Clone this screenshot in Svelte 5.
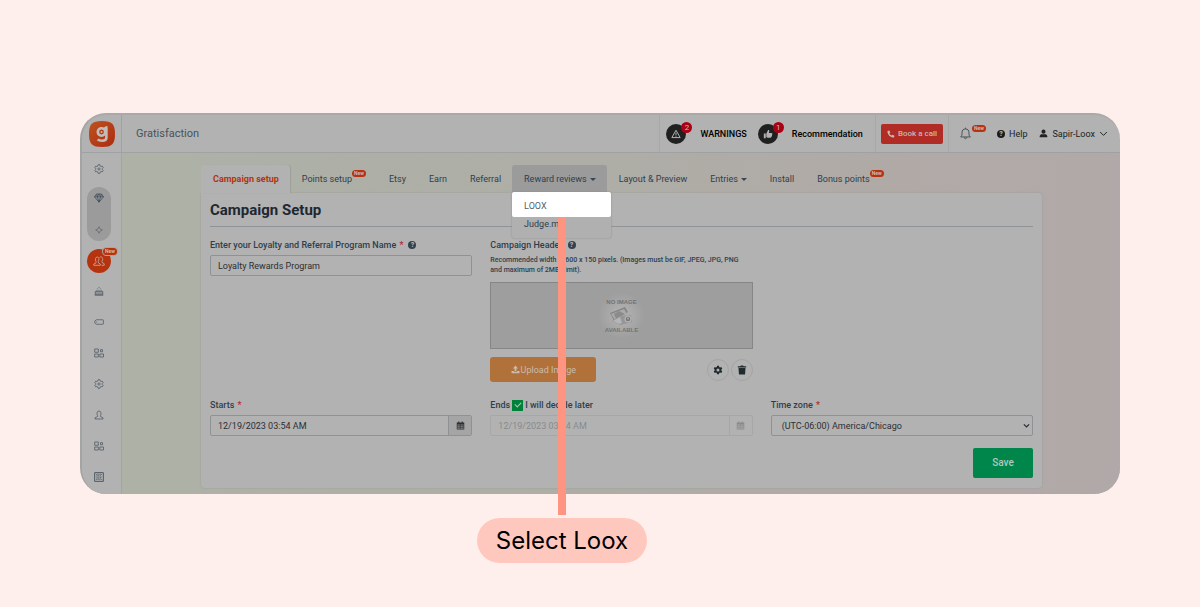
<script lang="ts">
	type Tab = { label: string; isNew?: boolean; items?: string[]; open?: boolean };

	const tabs: Tab[] = [
		{ label: 'Campaign setup' },
		{ label: 'Points setup', isNew: true },
		{ label: 'Etsy' },
		{ label: 'Earn' },
		{ label: 'Referral' },
		{ label: 'Reward reviews', items: ['LOOX', 'Judge.me'], open: true },
		{ label: 'Layout & Preview' },
		{ label: 'Entries', items: [] },
		{ label: 'Install' },
		{ label: 'Bonus points', isNew: true }
	];

	const lowerNav = ['cake', 'tag', 'widgets', 'gear', 'person', 'widgets', 'pattern'];

	let active = $state(0);
	let programName = $state('Loyalty Rewards Program');
	let starts = $state('12/19/2023 03:54 AM');
	let decideLater = $state(true);
</script>

{#snippet icon(name: string)}
	<svg class="icon" viewBox="0 0 12 12" aria-hidden="true">
		{#if name === 'gear'}
			<path d="M5 .8h2l.3 1.500 1.200.7 1.500-.4 1 1.800-1 1v1.200l1 1-1 1.800-1.500-.4-1.200.7-.3 1.500H5l-.3-1.500L3.500 9 2 9.400 1 7.600l1-1V5.400l-1-1 1-1.800 1.500.4 1.200-.7z" />
			<circle cx="6" cy="6" r="1.300" />
		{:else if name === 'diamond'}
			<path d="M3 1.200h6l2.500 3.300L6 11 .5 4.500zM.5 4.500h11M3 1.200l1 3.300L6 11l2-6.500 1-3.300M4 4.500l2-3.300 2 3.300" />
		{:else if name === 'sparkle'}
			<path d="M6 2 7.300 4.700 10 6 7.300 7.300 6 10 4.700 7.300 2 6l2.700-1.300z" />
		{:else if name === 'people'}
			<path d="M.8 10.300V9l2.200-1.200V6.500C1.800 4.500 2.500 2 4.200 2s2.300 2.500 1.100 4.500v1.300l2 1.200v1.300zM6.500 2.500c.5-.6 1.200-.8 1.800-.6 1.500.3 1.800 2.600.7 4.300v1.300l2.200 1.200v1.600H8.500" />
		{:else if name === 'cake'}
			<path d="M1.500 10.500v-4h9v4zM.8 11h10.400M1.500 8.500h9M3.500 6.300V4.500M6 6.300V4.500M8.500 6.300V4.500M6 1v1.300M4.300 2.800v.7M7.700 2.800v.7" />
		{:else if name === 'tag'}
			<path d="M3 3.300h7.500q.8 0 .8.8v3.800q0 .8-.8.8H3L1 7.300V4.700zM3.300 5.400v1.200" />
		{:else if name === 'widgets'}
			<path d="M.8 1.200h4.400v3.900H.8zM7.800 2h2.400v2.500H7.800zM.8 7.200h4.400v3.600H.8zM7 7.200h4.400v3.600H7z" />
		{:else if name === 'person'}
			<path d="M1.200 10.800V9.400l3-1.600v-1C3 4.500 3.500 1.200 6 1.200s3 3.300 1.800 5.600v1l3 1.600v1.400z" />
		{:else if name === 'pattern'}
			<path stroke-width="1.200" d="M.8.8h10.400v10.400H.8z" />
			<path stroke-dasharray="1 1" d="M2.500 3h7M3 4.500h6M2.500 6h7M3 7.500h6M2.500 9h7M4.500 2v8M7.500 2v8" />
		{:else if name === 'bell'}
			<path d="M1.500 9.200c1.300-1 1.300-2 1.300-4C2.800 3 4 1.800 6 1.800S9.200 3 9.200 5.200c0 2 0 3 1.300 4zM6 .6v1.200M4.800 9.500c.1 1.700 2.300 1.700 2.400 0" />
		{:else if name === 'chevron'}
			<path stroke-width="1.300" d="M1.500 4 6 8.500 10.500 4" />
		{:else if name === 'arrow'}
			<path stroke-width="2.200" d="M1.500 4 6 8.500 10.500 4" />
		{:else if name === 'warning'}
			<path stroke-width="1.200" d="M6 1.500 11 10.300H1zM6 4.500v3M6 8.200v1" />
		{/if}
	</svg>
{/snippet}

{#snippet solid(name: string)}
	<svg class="icon solid" viewBox="0 0 12 12" aria-hidden="true">
		{#if name === 'thumb'}
			<path d="M1 5.500h2.300V11H1zM4 5.500 6.200 1.200c1-.3 1.600.5 1.300 1.500L7 4.700h3.200c1 0 1.200.9.800 1.500.3.5.2 1-.2 1.300.1.500 0 1-.4 1.300 0 1-.6 1.700-1.600 1.700H6c-.8 0-1.300-.5-2-.8z" />
		{:else if name === 'phone'}
			<path d="M.6 1.500 3.500.8l1.500 3-1.400 1.300c.7 1.500 1.800 2.600 3.300 3.300L8.200 7l3 1.500-.7 2.900C5 11.400.6 7 .6 1.500z" />
		{:else if name === 'user'}
			<circle cx="6" cy="3.500" r="2.700" />
			<path d="M1 11V9.800C1 7.800 2.500 7 4 7h4c1.500 0 3 .8 3 2.800V11z" />
		{:else if name === 'upload'}
			<path d="M6 .8 9.500 4.500H7.200V8H4.800V4.500H2.500zM.7 8h3.200v1h4.200V8h3.200v3H.7z" />
		{:else if name === 'cog'}
			<path fill-rule="evenodd" d="M4.900.8h2.200l.4 1.500 1 .6 1.500-.4 1.100 1.900L10 5.500v1l1.100 1.100L10 9.500l-1.500-.4-1 .6-.4 1.500H4.900l-.4-1.500-1-.6-1.500.4L.9 7.600 2 6.500v-1L.9 4.400 2 2.500l1.500.4 1-.6zM6 4.200a1.800 1.800 0 1 0 0 3.600 1.800 1.800 0 0 0 0-3.600z" />
		{:else if name === 'trash'}
			<path d="M1 1.500h3L4.700.7h2.600l.7.800h3V3H1zM1.800 3.700h8.400l-.5 7q-.1.600-.8.600H3.100q-.7 0-.8-.6z" />
		{:else if name === 'calendar'}
			<path fill-rule="evenodd" d="M1 2h2V.8h1.500V2h3V.8H9V2h2v9.200H1zM2 4.700v1.400h1.700V4.700zm2.500 0v1.400h1.200V4.700zm2 0v1.400h1.200V4.700zm2 0v1.400H10V4.700zM2 7v1.200h1.700V7zm2.500 0v1.200h1.200V7zm2 0v1.200h1.200V7zm2 0v1.200H10V7zM2 9v1.300h1.700V9zm2.500 0v1.300h1.200V9zm2 0v1.300h1.200V9zm2 0v1.300H10V9z" />
		{/if}
	</svg>
{/snippet}

<div class="page">
	<div class="window">
		<header>
			<a class="logo" href="/" aria-label="Gratisfaction home">
				<svg viewBox="0 0 26 26" aria-hidden="true">
					<defs>
						<linearGradient id="flame" x1="0" y1="0" x2="1" y2="1">
							<stop offset="0" stop-color="#bd521f" />
							<stop offset="1" stop-color="#ae2c0f" />
						</linearGradient>
					</defs>
					<path fill="url(#flame)" d="M13 0c10 0 13 3 13 13s-3 13-13 13S0 23 0 13 3 0 13 0z" />
					<g fill="none" stroke="#c2bdba">
						<circle cx="12.500" cy="11" r="3.700" stroke-width="2.600" />
						<path stroke-width="2.600" d="M17.400 7v9.500q0 3.200-4.400 3.200-3 0-4.300-1.400" />
						<path stroke-width="2" d="M15.500 8q.5-2 3-2" />
					</g>
					<circle cx="12.500" cy="11" r="1" fill="#c2bdba" />
				</svg>
			</a>
			<span class="brand">Gratisfaction</span>

			<div class="alerts">
				<span class="round">{@render icon('warning')}<b>2</b></span>
				<a class="strong" href="#warnings">WARNINGS</a>
				<span class="round">{@render solid('thumb')}<b>1</b></span>
				<a class="strong" href="#recommendation">Recommendation</a>
			</div>
			<div class="call">
				<button>{@render solid('phone')} Book a call</button>
			</div>
			<div class="account">
				<button class="bell" aria-label="Notifications">{@render icon('bell')}<span class="new">New</span></button>
				<a class="help-link" href="#help"><span class="help">?</span>Help</a>
				<button class="user">{@render solid('user')}Sapir-Loox{@render icon('chevron')}</button>
			</div>
		</header>

		<div class="body">
			<nav class="side" aria-label="Main">
				<a href="#settings" aria-label="Settings">{@render icon('gear')}</a>
				<div class="group">
					<a href="#loyalty" aria-label="Loyalty">{@render icon('diamond')}</a>
					<a href="#sparkle" aria-label="Highlights">{@render icon('sparkle')}</a>
				</div>
				<a class="members" href="#members" aria-label="Members">{@render icon('people')}<span class="new">New</span></a>
				{#each lowerNav as name}
					<a href="#{name}" aria-label={name}>{@render icon(name)}</a>
				{/each}
			</nav>

			<main>
				<div class="tabs">
					{#each tabs as tab, i}
						<div class="tab-wrap">
							<button class="tab" class:active={active === i} class:open={tab.open} onclick={() => (active = i)}>
								{tab.label}{#if tab.isNew}<span class="new">New</span>{/if}{#if tab.items}<span class="caret"></span>{/if}
							</button>
							{#if tab.open && tab.items}
								<div class="menu">
									{#each tab.items as item, n}
										<a class:lit={n === 0} href="#{item}">{item}</a>
									{/each}
								</div>
							{/if}
						</div>
					{/each}
				</div>

				<form class="panel" onsubmit={(e) => e.preventDefault()}>
					<h1>Campaign Setup</h1>

					<div class="fields">
						<div class="field">
							<div class="label">
								<label for="program">Enter your Loyalty and Referral Program Name <i>*</i></label>
								<span class="help">?</span>
							</div>
							<input id="program" type="text" bind:value={programName} />
						</div>
						<div class="field">
							<div class="label">Campaign Header <span class="help">?</span></div>
							<p class="hint">
								Recommended width is 600 x 150 pixels. (Images must be GIF, JPEG, JPG, PNG and maximum of 2MB Limit).
							</p>
							<div class="preview">
								<span>NO IMAGE</span>
								<svg viewBox="0 0 24 20" aria-hidden="true">
									<path fill="#858585" d="m1 7 15-6 3 5-14 9z" />
									<path fill="#aaa" d="m2 8 13-5 3 5-12 6z" />
									<path fill="#8b8b8b" d="m5 8 5-3 6 3-9 5z" />
									<path fill="#969696" d="m3 15 8-5 11-1 1 7-12 3z" />
									<path fill="#b5b5b5" d="m4 15 7-4 2 6-3 1z" />
									<circle cx="19" cy="13" r="3.500" fill="#b3b3b3" />
									<circle cx="19" cy="13" r="2.300" fill="#777" />
									<circle cx="19" cy="12.500" r="1" fill="#aaa" />
								</svg>
								<span>AVAILABLE</span>
							</div>
							<div class="actions">
								<button class="upload" type="button">{@render solid('upload')}Upload Image</button>
								<button class="circle" type="button" aria-label="Image settings">{@render solid('cog')}</button>
								<button class="circle" type="button" aria-label="Delete image">{@render solid('trash')}</button>
							</div>
						</div>
					</div>

					<div class="fields">
						<div class="field">
							<div class="label"><label for="starts">Starts <i>*</i></label></div>
							<div class="date">
								<input id="starts" type="text" bind:value={starts} />
								<button type="button" aria-label="Pick start date">{@render solid('calendar')}</button>
							</div>
						</div>
						<div class="field">
							<div class="label">
								<label for="ends">Ends</label>
								<label class="later"><input type="checkbox" bind:checked={decideLater} />I will decide later</label>
							</div>
							<div class="date" class:off={decideLater}>
								<input id="ends" type="text" value="12/19/2023 03:54 AM" disabled={decideLater} />
								<button type="button" aria-label="Pick end date" disabled={decideLater}>{@render solid('calendar')}</button>
							</div>
						</div>
						<div class="field">
							<div class="label"><label for="zone">Time zone <i>*</i></label></div>
							<div class="select">
								<select id="zone">
									<option>(UTC-06:00) America/Chicago</option>
								</select>
								{@render icon('arrow')}
							</div>
						</div>
					</div>

					<button class="save">Save</button>
				</form>
			</main>
		</div>
	</div>

	<div class="callout">Select Loox</div>
</div>

<style>
	:global(body) {
		margin: 0;
		background: #ffefec;
	}

	.page {
		padding: 113px 80px 44px;
		font-family: Roboto, sans-serif;
		font-size: 9px;
		line-height: 12px;
		font-weight: 400;
		color: #2f3e4c;
	}

	.page *,
	.page *::before {
		box-sizing: border-box;
	}

	button,
	input,
	select {
		font: inherit;
		color: inherit;
		margin: 0;
		padding: 0;
		border: 0;
		background: none;
	}

	a {
		color: inherit;
		text-decoration: none;
	}

	.icon {
		display: block;
		width: 10px;
		height: 10px;
		flex: none;
		fill: none;
		stroke: currentColor;
		stroke-width: 0.9;
	}

	.solid {
		fill: currentColor;
		stroke: none;
	}

	.window {
		border-top: 2px solid #a9a9a9;
		border-left: 2px solid #a3a4a4;
		border-radius: 26px;
		overflow: hidden;
		background: #b2b2b2;
	}

	header {
		display: flex;
		height: 38px;
		border-bottom: 1px solid #9fa1a3;
		color: #202223;
	}

	.logo {
		width: 40px;
		display: flex;
		align-items: center;
		justify-content: center;
		border-right: 1px solid #9fa1a3;
	}

	.logo svg {
		width: 26px;
		height: 26px;
	}

	.brand {
		align-self: center;
		margin-left: 14px;
		font-size: 11px;
		color: #47525c;
	}

	.alerts,
	.call,
	.account {
		display: flex;
		align-items: center;
		border-left: 1px solid #a7a7a8;
	}

	.alerts {
		margin-left: auto;
		padding: 0 12px 0 6px;
	}

	.round {
		position: relative;
		display: flex;
		align-items: center;
		justify-content: center;
		width: 20px;
		height: 20px;
		border-radius: 50%;
		background: #202020;
		color: #b2b2b2;
	}

	.round b {
		position: absolute;
		top: -2px;
		right: -6px;
		width: 11px;
		height: 11px;
		border-radius: 50%;
		background: #a80014;
		color: #d0bcbc;
		font-size: 8px;
		font-weight: 400;
		line-height: 11px;
		text-align: center;
	}

	.strong {
		margin: 0 11px 0 14px;
		color: #000;
		font-weight: 500;
	}

	.strong:last-child {
		margin-right: 0;
	}

	.call {
		padding: 0 5px;
	}

	.call button {
		display: flex;
		align-items: center;
		gap: 3px;
		height: 20px;
		padding: 0 6px;
		border-radius: 2px;
		background: #b02c25;
		color: #c9b5b3;
		font-size: 8px;
		font-weight: 500;
	}

	.call .icon {
		width: 8px;
		height: 8px;
	}

	.account {
		padding: 0 12px 0 10px;
	}

	.bell {
		display: flex;
		align-items: center;
		color: #4b5055;
	}

	.bell .icon {
		width: 13px;
		height: 13px;
	}

	.new {
		height: 7px;
		width: 14px;
		border-radius: 4px;
		background: #b5330f;
		color: #d3b8ae;
		font-size: 5px;
		font-weight: 700;
		line-height: 7px;
		text-align: center;
	}

	.bell .new {
		margin-bottom: 10px;
	}

	.help {
		display: inline-block;
		width: 8px;
		height: 8px;
		border-radius: 50%;
		background: #34414d;
		color: #b2b2b2;
		font-size: 7px;
		font-weight: 900;
		line-height: 8px;
		text-align: center;
	}

	.help-link {
		display: flex;
		align-items: center;
		gap: 4px;
		margin: 0 12px 0 11px;
	}

	.help-link .help {
		background: #1c1c1c;
	}

	.user {
		display: flex;
		align-items: center;
		gap: 4px;
	}

	.user .icon {
		width: 9px;
		height: 9px;
	}

	.body {
		display: flex;
		background: linear-gradient(90deg, #adb1a6 10%, #aeaea6 45%, #b0aaa6 75%, #b1a9a9);
	}

	.side {
		display: flex;
		flex-direction: column;
		align-items: center;
		width: 40px;
		flex: none;
		padding-right: 5px;
		border-right: 1px solid #a2a4a5;
		background: #b2b2b2;
		color: #4c5762;
	}

	.side > a {
		display: flex;
		align-items: center;
		justify-content: center;
		width: 24px;
		height: 31px;
	}

	.group {
		display: flex;
		flex-direction: column;
		justify-content: space-between;
		align-items: center;
		width: 24px;
		height: 54px;
		margin: 3px 0 8px;
		padding: 6px 0;
		border-radius: 12px;
		background: #9b9b9b;
		color: #3c4a58;
	}

	.group a:last-child {
		color: #616970;
	}

	.side > .members {
		position: relative;
		height: 24px;
		margin-bottom: 2px;
		border-radius: 50%;
		background: #b5330f;
		color: #c9a294;
	}

	.members .icon {
		width: 12px;
		height: 12px;
	}

	.members .new {
		position: absolute;
		top: -1px;
		left: 16px;
		box-shadow: 0 0 0 1px #b2a29d;
	}

	main {
		flex: 1;
		min-width: 0;
		padding: 12px 78px 6px 79px;
	}

	.tabs {
		display: flex;
	}

	.tab-wrap {
		position: relative;
	}

	.tab {
		display: flex;
		align-items: center;
		height: 28px;
		padding: 0 11px 0 12px;
		border-radius: 3px 3px 0 0;
		white-space: nowrap;
	}

	.tab.active {
		background: #b2b2b2;
		color: #b5330f;
		font-weight: 700;
		box-shadow: 1px 0 1px #9d9f99;
	}

	.tab.open {
		background: #9b9b9b;
	}

	.tab .new {
		margin-bottom: 11px;
	}

	.caret {
		margin-left: 3px;
		border: 3px solid transparent;
		border-top-color: #3a4550;
		border-bottom: 0;
	}

	.menu {
		position: absolute;
		z-index: 1;
		top: 27px;
		left: 0;
		width: 99px;
		padding-bottom: 7px;
		border-radius: 2px;
		background: #b0b0b0;
		box-shadow: 0 0 2px #888;
	}

	.menu a {
		display: block;
		padding: 1px 12px;
	}

	.menu .lit {
		padding: 8px 12px 5px;
		border-radius: 2px;
		background: #fff;
		color: #51606e;
	}

	.panel {
		display: flex;
		flex-direction: column;
		padding: 7px 9px 10px;
		border-radius: 0 4px 4px 4px;
		background: #b2b2b2;
		box-shadow: 0 0 2px #989a95;
	}

	h1 {
		margin: 0 0 12px;
		padding-bottom: 6px;
		border-bottom: 1px solid #919497;
		font-size: 15px;
		line-height: 20px;
		font-weight: 700;
		color: #1e2831;
	}

	.fields {
		display: grid;
		grid-template-columns: repeat(3, minmax(0, 1fr));
		gap: 18px;
	}

	.fields + .fields {
		margin-top: 17px;
	}

	.label {
		display: flex;
		align-items: center;
		gap: 5px;
		height: 12px;
		margin-bottom: 4px;
		font-weight: 500;
	}

	i {
		margin-left: 1px;
		font-style: normal;
		color: #b3282d;
	}

	.field > input,
	.select,
	.date {
		width: 100%;
		height: 21px;
		border: 1px solid #8f9294;
		border-radius: 2px;
		color: #2c2f32;
	}

	.field > input {
		padding: 0 7px;
	}

	.select {
		display: grid;
		align-items: center;
	}

	.select > :global(*) {
		grid-area: 1 / 1;
	}

	select {
		appearance: none;
		height: 19px;
		padding: 0 16px 0 10px;
	}

	.select .icon {
		width: 7px;
		height: 7px;
		margin-right: 2px;
		justify-self: end;
		pointer-events: none;
	}

	.hint {
		margin: 0 0 7px;
		padding-right: 4px;
		font-size: 7px;
		line-height: 10px;
		font-weight: 500;
	}

	.preview {
		display: flex;
		flex-direction: column;
		align-items: center;
		justify-content: center;
		height: 67px;
		border: 1px solid #858687;
		background: radial-gradient(circle, #adadad 8px, #9e9e9e 23px);
		color: #737373;
		font-family: 'Liberation Sans', sans-serif;
		font-size: 6px;
		font-weight: 700;
		line-height: 8px;
	}

	.preview svg {
		width: 24px;
		height: 20px;
	}

	.actions {
		display: flex;
		align-items: center;
		gap: 2px;
		margin-top: 8px;
	}

	.upload {
		display: flex;
		align-items: center;
		justify-content: center;
		gap: 1px;
		width: 106px;
		height: 25px;
		margin-right: auto;
		border-radius: 3px;
		background: #b0723a;
		color: #c9bbae;
	}

	.upload .icon {
		width: 9px;
		height: 9px;
	}

	.circle {
		display: flex;
		align-items: center;
		justify-content: center;
		width: 22px;
		height: 22px;
		border: 1px solid #a3a4a4;
		border-radius: 50%;
		color: #202b2f;
	}

	.date {
		display: flex;
		overflow: hidden;
	}

	.date input {
		flex: 1;
		min-width: 0;
		padding: 0 7px;
	}

	.date button {
		display: flex;
		align-items: center;
		justify-content: center;
		width: 23px;
		border-left: 1px solid #8f9294;
		background: #a5a5a5;
		color: #2c3033;
	}

	.date .icon {
		width: 9px;
		height: 9px;
	}

	.date.off,
	.date.off button {
		border-color: #a5a7a8;
		background: none;
		color: #888b8d;
	}

	.later {
		display: flex;
		align-items: center;
		gap: 2px;
		margin-left: -3px;
	}

	.later input {
		appearance: none;
		width: 11px;
		height: 11px;
		background: #00813a;
		display: grid;
		place-items: center;
	}

	.later input:checked::before {
		content: '';
		width: 6px;
		height: 4px;
		margin-bottom: 2px;
		border: solid #b2c5b8;
		border-width: 0 0 1px 1px;
		transform: rotate(-45deg);
	}

	.save {
		align-self: flex-end;
		width: 60px;
		height: 30px;
		margin-top: 12px;
		border-radius: 2px;
		background: #00854b;
		color: #b2c8bc;
		font-size: 10px;
		font-weight: 500;
	}

	.callout {
		position: relative;
		width: 170px;
		margin: 24px 0 0 397px;
		border-radius: 23px;
		background: #ffc8bf;
		color: #000;
		font-family: Inter, sans-serif;
		font-size: 24px;
		font-weight: 400;
		line-height: 45px;
		text-align: center;
	}

	.callout::before {
		content: '';
		position: absolute;
		z-index: 2;
		bottom: 48px;
		left: 81px;
		width: 8px;
		height: 298px;
		background: #ff9580;
	}
</style>
